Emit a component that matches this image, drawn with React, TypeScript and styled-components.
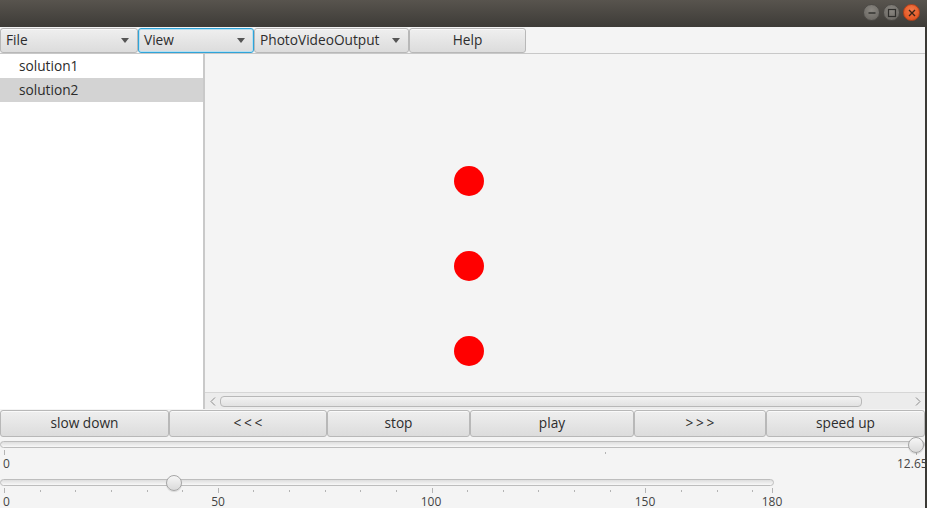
import styled, { createGlobalStyle } from 'styled-components'

const GlobalStyle = createGlobalStyle`
	html, body {
		margin: 0;
		padding: 0;
		background: #3b3a36;
		overflow: hidden;
	}
	* {
		box-sizing: border-box;
	}
`

const menus = [
	{ label: 'File', width: 138, arrow: true },
	{ label: 'View', width: 116, arrow: true, focused: true },
	{ label: 'PhotoVideoOutput', width: 155, arrow: true },
	{ label: 'Help', width: 117, arrow: false },
]

const controls = [
	{ label: 'slow down', width: 169 },
	{ label: '<<<', width: 158, spaced: true },
	{ label: 'stop', width: 143 },
	{ label: 'play', width: 164 },
	{ label: '>>>', width: 132, spaced: true },
	{ label: 'speed up', width: 159 },
]

const dots = [181, 266, 351]

// angle slider: major every 50, five minor ticks between, last tick clamped to track end
const angleTicks = (() => {
	const out: { x: number; major: boolean }[] = []
	for (let i = 0; i <= 21; i++) {
		out.push({ x: Math.round(4 + i * 35.63), major: i % 6 === 0 })
	}
	out.push({ x: 772, major: true })
	return out
})()

const angleLabels = [
	{ v: 0, x: 3 },
	{ v: 50, x: 218 },
	{ v: 100, x: 431 },
	{ v: 150, x: 645 },
	{ v: 180, x: 772 },
]

const App = (): JSX.Element => {
	return (
		<Window>
			<GlobalStyle />
			<TitleBar>
				<WinButton>
					<svg width="10" height="10" viewBox="0 0 10 10">
						<path d="M1.5 5h7" stroke="#2f2e2b" strokeWidth="1.4" />
					</svg>
				</WinButton>
				<WinButton>
					<svg width="10" height="10" viewBox="0 0 10 10">
						<rect x="1.5" y="1.5" width="7" height="7" fill="none" stroke="#2f2e2b" strokeWidth="1.2" />
					</svg>
				</WinButton>
				<WinButton close>
					<svg width="10" height="10" viewBox="0 0 10 10">
						<path d="M2 2l6 6M8 2l-6 6" stroke="#3a2316" strokeWidth="1.4" />
					</svg>
				</WinButton>
			</TitleBar>
			<Body>
				<MenuBar>
					{menus.map((m) => (
						<MenuButton key={m.label} width={m.width} focused={!!m.focused} centered={!m.arrow}>
							<span>{m.label}</span>
							{m.arrow && <Arrow />}
						</MenuButton>
					))}
				</MenuBar>
				<Main>
					<List>
						<ListItem>solution1</ListItem>
						<ListItem selected>solution2</ListItem>
					</List>
					<Divider />
					<Viewer>
						<Canvas>
							{dots.map((y) => (
								<Dot key={y} style={{ top: y - 54 - 15 }} />
							))}
						</Canvas>
						<HScroll>
							<ScrollArrow>
								<svg width="6" height="9" viewBox="0 0 6 9">
									<path d="M5 0.5L1 4.5L5 8.5" fill="none" stroke="#8a8a8a" strokeWidth="1" />
								</svg>
							</ScrollArrow>
							<ScrollThumb />
							<ScrollArrow>
								<svg width="6" height="9" viewBox="0 0 6 9">
									<path d="M1 0.5L5 4.5L1 8.5" fill="none" stroke="#8a8a8a" strokeWidth="1" />
								</svg>
							</ScrollArrow>
						</HScroll>
					</Viewer>
				</Main>
				<ControlBar>
					{controls.map((c) => (
						<ControlButton key={c.label} width={c.width} spaced={!!c.spaced}>
							{c.label}
						</ControlButton>
					))}
				</ControlBar>
				<SliderBlock height={34} offset={0}>
					<Track width={925} />
					<Tick major style={{ left: 4 }} />
					<Tick style={{ left: 605 }} />
					<Tick major style={{ left: 916 }} />
					<Thumb style={{ left: 916 - 8 }} />
					<TickLabel style={{ left: 3 }}>0</TickLabel>
					<TickLabel style={{ left: 897 }}>12.65</TickLabel>
				</SliderBlock>
				<SliderBlock height={38} offset={4}>
					<Track width={774} />
					{angleTicks.map((t) => (
						<Tick key={t.x} major={t.major} style={{ left: t.x }} />
					))}
					<Thumb style={{ left: 174 - 8 }} />
					{angleLabels.map((l) => (
						<TickLabel key={l.v} centered={l.v !== 0} style={{ left: l.x }}>
							{l.v}
						</TickLabel>
					))}
				</SliderBlock>
			</Body>
		</Window>
	)
}

export default App

const Window = styled.div`
	width: 927px;
	height: 508px;
	display: flex;
	flex-direction: column;
	font-family: 'Open Sans', 'Noto Sans', sans-serif;
	font-size: 13.7px;
	color: #333;
`

const TitleBar = styled.div`
	height: 27px;
	flex: none;
	display: flex;
	justify-content: flex-end;
	align-items: center;
	gap: 3px;
	padding: 0 7px 2px 0;
	background: linear-gradient(#58544e, #3d3b37);
`

const WinButton = styled.div<{ close?: boolean }>`
	width: 17px;
	height: 17px;
	border-radius: 50%;
	display: flex;
	align-items: center;
	justify-content: center;
	background: ${(p) =>
		p.close
			? 'radial-gradient(circle at 50% 35%, #f27a4a, #df4b16)'
			: 'radial-gradient(circle at 50% 35%, #8a8781, #65625d)'};
	border: 1px solid ${(p) => (p.close ? '#b8411a' : '#4d4b47')};
`

const Body = styled.div`
	width: 925px;
	flex: 1;
	display: flex;
	flex-direction: column;
	background: #f4f4f4;
	overflow: hidden;
`

const MenuBar = styled.div`
	height: 27px;
	flex: none;
	display: flex;
	padding-top: 1px;
	border-bottom: 1px solid #c8c8c8;
`

const MenuButton = styled.div<{ width: number; focused: boolean; centered: boolean }>`
	width: ${(p) => p.width}px;
	flex: none;
	display: flex;
	align-items: center;
	justify-content: ${(p) => (p.centered ? 'center' : 'space-between')};
	padding: 0 ${(p) => (p.centered ? 0 : 8)}px 2px ${(p) => (p.centered ? 0 : 5)}px;
	border: 1px solid ${(p) => (p.focused ? '#2fa4d9' : '#b8b8b8')};
	box-shadow: ${(p) => (p.focused ? 'inset 0 0 0 1px #b7e0f2' : 'inset 0 1px 0 #fafafa')};
	border-radius: 3px;
	background: linear-gradient(#efefef, #dcdcdc);
	color: #2d2d2d;
	white-space: nowrap;
`

const Arrow = styled.span`
	width: 0;
	height: 0;
	margin-top: 1px;
	border-left: 4.5px solid transparent;
	border-right: 4.5px solid transparent;
	border-top: 5px solid #555;
`

const Main = styled.div`
	height: 355px;
	flex: none;
	display: flex;
`

const List = styled.div`
	width: 203px;
	flex: none;
	background: #fff;
`

const ListItem = styled.div<{ selected?: boolean }>`
	height: 24px;
	line-height: 24px;
	padding-left: 19px;
	background: ${(p) => (p.selected ? '#d3d3d3' : '#fff')};
	color: #2b2b2b;
`

const Divider = styled.div`
	width: 2px;
	flex: none;
	background: #c9c9c9;
`

const Viewer = styled.div`
	flex: 1;
	display: flex;
	flex-direction: column;
`

const Canvas = styled.div`
	position: relative;
	flex: 1;
	background: #f4f4f4;
`

const Dot = styled.div`
	position: absolute;
	left: ${469 - 205 - 15}px;
	width: 30px;
	height: 30px;
	border-radius: 50%;
	background: #ff0000;
`

const HScroll = styled.div`
	height: 17px;
	flex: none;
	display: flex;
	align-items: center;
	border-top: 1px solid #d6d6d6;
	background: #ececec;
`

const ScrollArrow = styled.div`
	width: 15px;
	height: 16px;
	flex: none;
	display: flex;
	align-items: center;
	justify-content: center;
`

const ScrollThumb = styled.div`
	flex: 1;
	height: 11px;
	margin-right: 48px;
	border: 1px solid #b8b8b8;
	border-radius: 4px;
	background: linear-gradient(#f2f2f2, #e2e2e2);
`

const ControlBar = styled.div`
	height: 28px;
	flex: none;
	display: flex;
	padding-top: 1px;
`

const ControlButton = styled.div<{ width: number; spaced: boolean }>`
	width: ${(p) => p.width}px;
	flex: none;
	display: flex;
	align-items: center;
	justify-content: center;
	padding-bottom: 2px;
	border: 1px solid #b8b8b8;
	border-radius: 3px;
	background: linear-gradient(#efefef, #dcdcdc);
	box-shadow: inset 0 1px 0 #fafafa;
	color: #2d2d2d;
	letter-spacing: ${(p) => (p.spaced ? '2.7px' : 'normal')};
	text-indent: ${(p) => (p.spaced ? '2.7px' : '0')};
`

const SliderBlock = styled.div<{ height: number; offset: number }>`
	position: relative;
	height: ${(p) => p.height}px;
	flex: none;
	--o: ${(p) => p.offset}px;
`

const Track = styled.div<{ width: number }>`
	position: absolute;
	left: 0;
	top: calc(var(--o) + 4px);
	width: ${(p) => p.width}px;
	height: 7px;
	border: 1px solid #bdbdbd;
	border-radius: 4px;
	background: linear-gradient(#dedede, #f8f8f8);
`

const Thumb = styled.div`
	position: absolute;
	top: var(--o);
	width: 16px;
	height: 16px;
	border-radius: 50%;
	border: 1px solid #a5a5a5;
	background: linear-gradient(#f6f6f6, #dadada);
	box-shadow: 0 1px 1px rgba(0, 0, 0, 0.12);
`

const Tick = styled.div<{ major?: boolean }>`
	position: absolute;
	top: calc(var(--o) + ${(p) => (p.major ? 13 : 15)}px);
	width: 1px;
	height: ${(p) => (p.major ? 5 : 2)}px;
	background: #b4b4b4;
`

const TickLabel = styled.div<{ centered?: boolean }>`
	position: absolute;
	top: calc(var(--o) + 20px);
	font-size: 12px;
	line-height: 13px;
	color: #444;
	transform: ${(p) => (p.centered ? 'translateX(-50%)' : 'none')};
	white-space: nowrap;
`
